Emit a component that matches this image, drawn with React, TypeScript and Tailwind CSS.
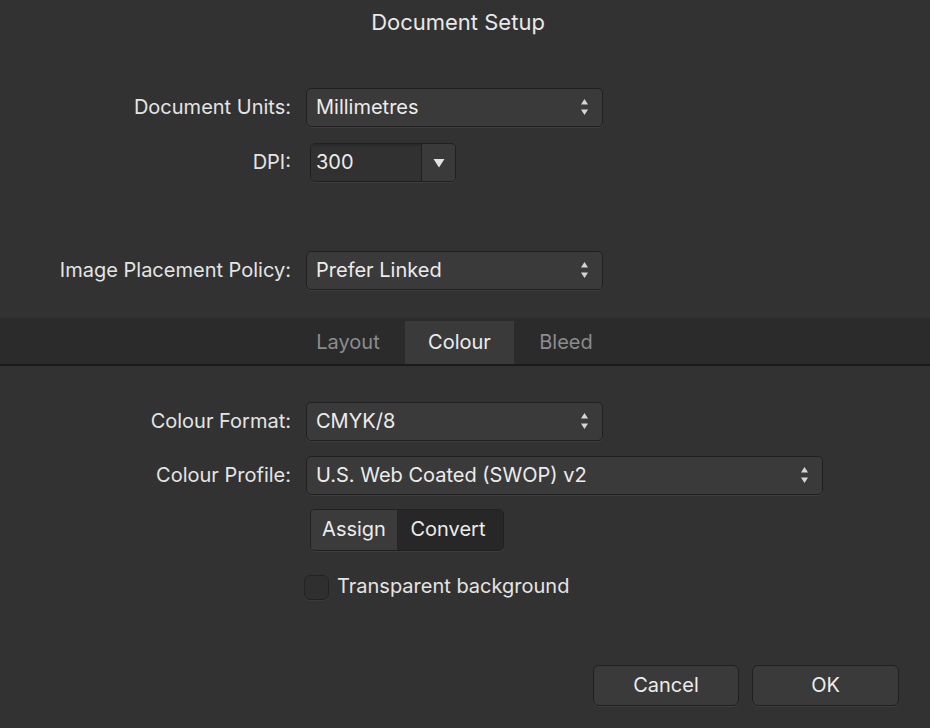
import React from 'react'

const font = { fontFamily: 'Inter, "Noto Sans", sans-serif' }

function Stepper() {
  return (
    <svg width="9" height="18" viewBox="0 0 9 18" className="shrink-0">
      <path d="M4.5 1 L8 6.5 L1 6.5 Z" fill="#d6d6d6" />
      <path d="M1 11.5 L8 11.5 L4.5 17 Z" fill="#d6d6d6" />
    </svg>
  )
}

function Popup({ value, width }: { value: string; width: string }) {
  return (
    <div
      className={`${width} h-[39px] flex items-center justify-between pl-[9px] pr-[13px] pb-[1px] rounded-[5px] bg-[#3a3a3a] border border-[#202020] shadow-[0_1px_0_#3d3d3d] text-[20px] text-[#ececec]`}
    >
      <span>{value}</span>
      <Stepper />
    </div>
  )
}

function Row({ label, children }: { label: string; children: React.ReactNode }) {
  return (
    <div className="flex items-center">
      <div className="w-[291px] text-right text-[20px] text-[#e4e4e4] pb-[2px]">{label}</div>
      <div className="ml-[15px]">{children}</div>
    </div>
  )
}

export default function App() {
  const tabs = [
    { label: 'Layout', active: false, w: 'w-[114px]' },
    { label: 'Colour', active: true, w: 'w-[109px]' },
    { label: 'Bleed', active: false, w: 'w-[104px]' },
  ]

  return (
    <div style={font} className="w-[930px] h-[728px] bg-[#323232] flex flex-col select-none">
      {/* Title */}
      <div className="h-[44px] flex items-center justify-center pr-[14px] text-[22px] text-[#e8e8e8]">
        Document Setup
      </div>

      <div className="mt-[44px]">
        <Row label="Document Units:">
          <Popup value="Millimetres" width="w-[297px]" />
        </Row>
      </div>

      {/* DPI combo */}
      <div className="mt-[16px]">
        <Row label="DPI:">
          <div className="ml-[4px] w-[146px] h-[39px] flex rounded-[5px] border border-[#202020] shadow-[0_1px_0_#3d3d3d] overflow-hidden">
            <div className="flex-1 flex items-center pl-[5px] pb-[1px] bg-[#313131] shadow-[inset_0_2px_0_#2a2a2a] text-[20px] text-[#ececec] border-r border-[#202020]">
              300
            </div>
            <div className="w-[33px] flex items-center justify-center bg-[#3a3a3a]">
              <svg width="12" height="10" viewBox="0 0 12 10">
                <path d="M0.5 1 L11.5 1 L6 9.5 Z" fill="#e2e2e2" />
              </svg>
            </div>
          </div>
        </Row>
      </div>

      <div className="mt-[69px]">
        <Row label="Image Placement Policy:">
          <Popup value="Prefer Linked" width="w-[297px]" />
        </Row>
      </div>

      {/* Tab bar */}
      <div className="mt-[28px] h-[48px] bg-[#2b2b2b] border-b-2 border-[#1a1a1a] flex items-end pl-[291px]">
        {tabs.map((t) => (
          <div
            key={t.label}
            className={
              t.active
                ? `${t.w} h-[43px] flex items-center justify-center pb-[2px] bg-[#3a3a3a] text-[20px] text-[#ececec]`
                : `${t.w} h-[43px] flex items-center justify-center pb-[2px] text-[20px] text-[#8c8c8c]`
            }
          >
            {t.label}
          </div>
        ))}
      </div>

      <div className="mt-[36px]">
        <Row label="Colour Format:">
          <Popup value="CMYK/8" width="w-[297px]" />
        </Row>
      </div>

      <div className="mt-[15px]">
        <Row label="Colour Profile:">
          <Popup value="U.S. Web Coated (SWOP) v2" width="w-[517px]" />
        </Row>
      </div>

      {/* Assign / Convert */}
      <div className="mt-[14px] pl-[310px]">
        <div className="inline-flex h-[42px] rounded-[5px] border border-[#202020] shadow-[0_1px_0_#3d3d3d] overflow-hidden text-[20px] text-[#ececec]">
          <div className="w-[86px] flex items-center justify-center pb-[2px] bg-[#3b3b3b]">Assign</div>
          <div className="w-[106px] flex items-center justify-center pb-[2px] bg-[#272727] pr-[4px]">Convert</div>
        </div>
      </div>

      {/* Checkbox */}
      <div className="mt-[20px] pl-[304px] flex items-center">
        <div className="w-[25px] h-[25px] rounded-[6px] bg-[#2f2f2f] border border-[#232323] shadow-[0_1px_0_#3a3a3a]" />
        <span className="ml-[8px] pb-[2px] text-[20px] text-[#e4e4e4]">Transparent background</span>
      </div>

      {/* Buttons */}
      <div className="mt-auto mb-[22px] flex justify-end pr-[31px] gap-[13px]">
        <button className="w-[146px] h-[41px] pb-[2px] rounded-[6px] bg-[#3a3a3a] border border-[#202020] shadow-[0_1px_0_#3d3d3d] text-[20px] text-[#ececec]">
          Cancel
        </button>
        <button className="w-[147px] h-[41px] pb-[2px] rounded-[6px] bg-[#3a3a3a] border border-[#202020] shadow-[0_1px_0_#3d3d3d] text-[20px] text-[#ececec]">
          OK
        </button>
      </div>
    </div>
  )
}
